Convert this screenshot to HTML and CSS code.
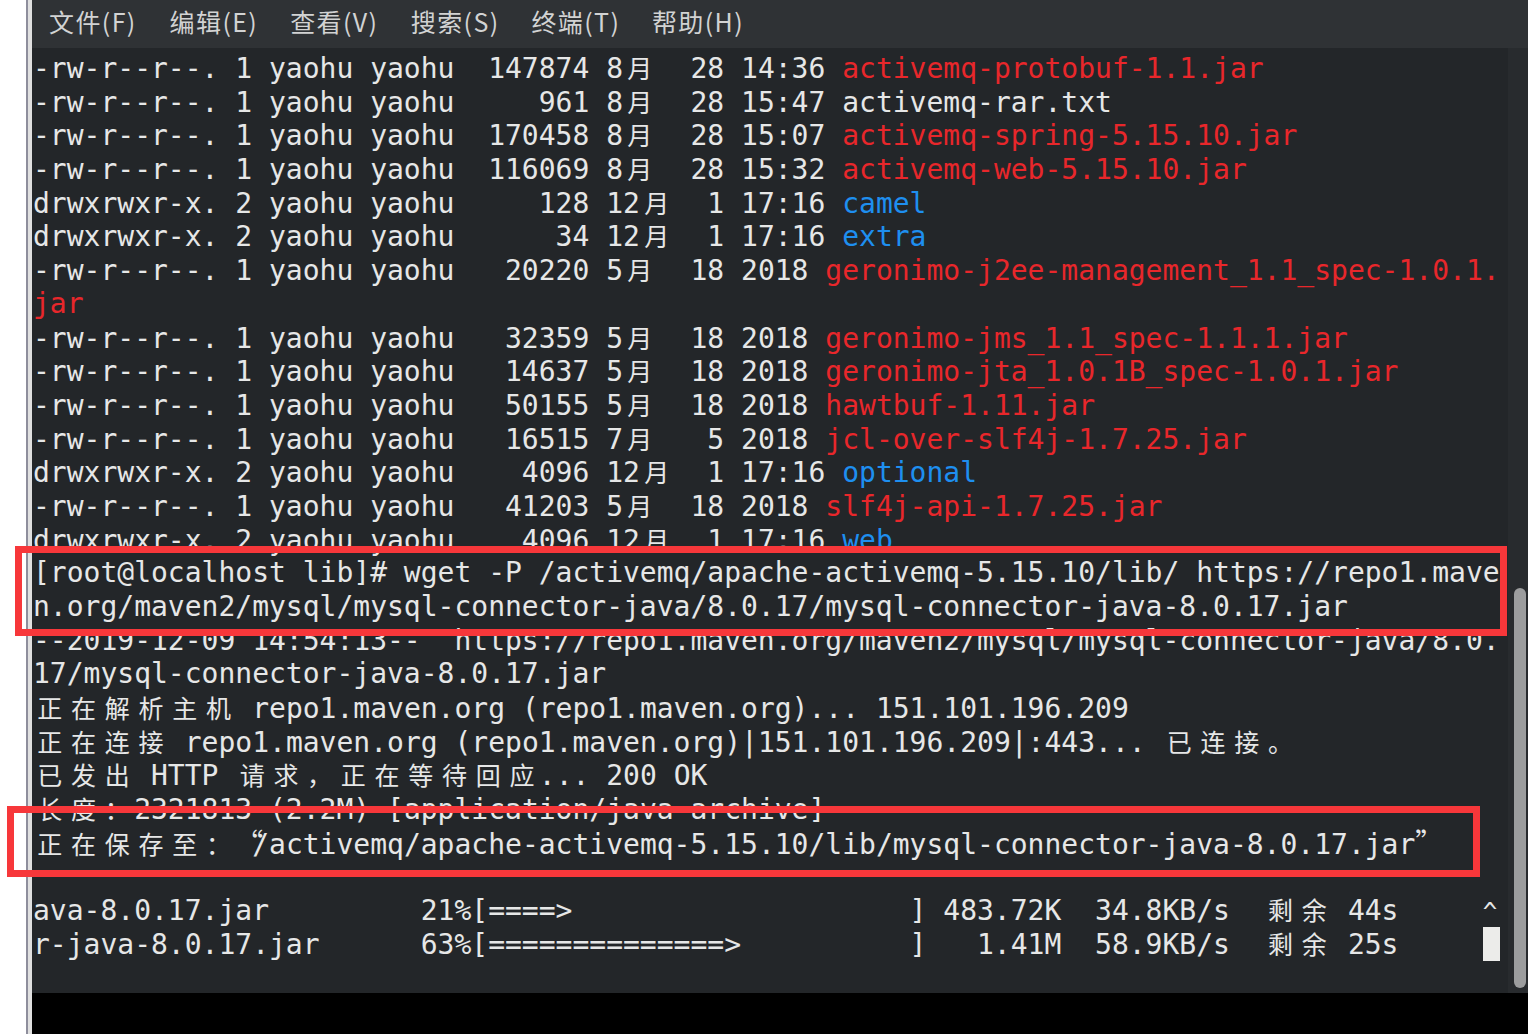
FILE: index.html
```html
<!DOCTYPE html>
<html lang="zh-CN">
<head>
<meta charset="utf-8">
<title>终端</title>
<link rel="stylesheet" href="styles.css">
</head>
<body>
<div class="app">
  <div class="gutter"></div>
  <div class="edge-dark"></div>
  <div class="edge-light"></div>
  <div class="window">
    <nav class="menubar">
      <span class="menu-item">文件(F)</span>
      <span class="menu-item">编辑(E)</span>
      <span class="menu-item">查看(V)</span>
      <span class="menu-item">搜索(S)</span>
      <span class="menu-item">终端(T)</span>
      <span class="menu-item">帮助(H)</span>
    </nav>
    <div class="term">
      <div class="screen">
<div class="row">-rw-r--r--. 1 yaohu yaohu  147874 8<span class="w">月</span>  28 14:36 <span class="r">activemq-protobuf-1.1.jar</span></div>
<div class="row">-rw-r--r--. 1 yaohu yaohu     961 8<span class="w">月</span>  28 15:47 activemq-rar.txt</div>
<div class="row">-rw-r--r--. 1 yaohu yaohu  170458 8<span class="w">月</span>  28 15:07 <span class="r">activemq-spring-5.15.10.jar</span></div>
<div class="row">-rw-r--r--. 1 yaohu yaohu  116069 8<span class="w">月</span>  28 15:32 <span class="r">activemq-web-5.15.10.jar</span></div>
<div class="row">drwxrwxr-x. 2 yaohu yaohu     128 12<span class="w">月</span>  1 17:16 <span class="b">camel</span></div>
<div class="row">drwxrwxr-x. 2 yaohu yaohu      34 12<span class="w">月</span>  1 17:16 <span class="b">extra</span></div>
<div class="row">-rw-r--r--. 1 yaohu yaohu   20220 5<span class="w">月</span>  18 2018 <span class="r">geronimo-j2ee-management_1.1_spec-1.0.1.</span></div>
<div class="row"><span class="r">jar</span></div>
<div class="row">-rw-r--r--. 1 yaohu yaohu   32359 5<span class="w">月</span>  18 2018 <span class="r">geronimo-jms_1.1_spec-1.1.1.jar</span></div>
<div class="row">-rw-r--r--. 1 yaohu yaohu   14637 5<span class="w">月</span>  18 2018 <span class="r">geronimo-jta_1.0.1B_spec-1.0.1.jar</span></div>
<div class="row">-rw-r--r--. 1 yaohu yaohu   50155 5<span class="w">月</span>  18 2018 <span class="r">hawtbuf-1.11.jar</span></div>
<div class="row">-rw-r--r--. 1 yaohu yaohu   16515 7<span class="w">月</span>   5 2018 <span class="r">jcl-over-slf4j-1.7.25.jar</span></div>
<div class="row">drwxrwxr-x. 2 yaohu yaohu    4096 12<span class="w">月</span>  1 17:16 <span class="b">optional</span></div>
<div class="row">-rw-r--r--. 1 yaohu yaohu   41203 5<span class="w">月</span>  18 2018 <span class="r">slf4j-api-1.7.25.jar</span></div>
<div class="row">drwxrwxr-x. 2 yaohu yaohu    4096 12<span class="w">月</span>  1 17:16 <span class="b">web</span></div>
<div class="row">[root@localhost lib]# wget -P /activemq/apache-activemq-5.15.10/lib/ https://repo1.mave</div>
<div class="row">n.org/maven2/mysql/mysql-connector-java/8.0.17/mysql-connector-java-8.0.17.jar</div>
<div class="row">--2019-12-09 14:54:13--  https://repo1.maven.org/maven2/mysql/mysql-connector-java/8.0.</div>
<div class="row">17/mysql-connector-java-8.0.17.jar</div>
<div class="row"><span class="w">正</span><span class="w">在</span><span class="w">解</span><span class="w">析</span><span class="w">主</span><span class="w">机</span> repo1.maven.org (repo1.maven.org)... 151.101.196.209</div>
<div class="row"><span class="w">正</span><span class="w">在</span><span class="w">连</span><span class="w">接</span> repo1.maven.org (repo1.maven.org)|151.101.196.209|:443... <span class="w">已</span><span class="w">连</span><span class="w">接</span><span class="w">。</span></div>
<div class="row"><span class="w">已</span><span class="w">发</span><span class="w">出</span> HTTP <span class="w">请</span><span class="w">求</span><span class="w">，</span><span class="w">正</span><span class="w">在</span><span class="w">等</span><span class="w">待</span><span class="w">回</span><span class="w">应</span>... 200 OK</div>
<div class="row"><span class="w">长</span><span class="w">度</span><span class="w">：</span>2321813 (2.2M) [application/java-archive]</div>
<div class="row"><span class="w">正</span><span class="w">在</span><span class="w">保</span><span class="w">存</span><span class="w">至</span><span class="w">：</span><span class="q">“</span>/activemq/apache-activemq-5.15.10/lib/mysql-connector-java-8.0.17.jar<span class="q">”</span></div>
<div class="row"> </div>
<div class="row">ava-8.0.17.jar         21%[====&gt;                    ] 483.72K  34.8KB/s  <span class="w">剩</span><span class="w">余</span> 44s     <span class="caret">^</span></div>
<div class="row">r-java-8.0.17.jar      63%[==============&gt;          ]   1.41M  58.9KB/s  <span class="w">剩</span><span class="w">余</span> 25s     <span class="cur"> </span></div>
      </div>
      <div class="trough"><div class="slider"></div></div>
    </div>
    <div class="bottom"></div>
  </div>
  <div class="mark mark-cmd"></div>
  <div class="mark mark-save"></div>
</div>
</body>
</html>
```
FILE: styles.css
```css
html, body {
  margin: 0;
  padding: 0;
  background: #ffffff;
}

.app {
  position: relative;
  display: flex;
  width: 1528px;
  height: 1034px;
  overflow: hidden;
}

.gutter {
  width: 26px;
  flex: none;
  background: #ffffff;
}

.edge-dark {
  width: 2px;
  flex: none;
  background: #8e8e9c;
}

.edge-light {
  width: 4px;
  flex: none;
  background: #e0e0e0;
}

.window {
  flex: 1;
  display: flex;
  flex-direction: column;
  min-width: 0;
}

.menubar {
  height: 48px;
  box-sizing: border-box;
  flex: none;
  display: flex;
  align-items: flex-start;
  padding: 3px 0 0 17px;
  background: #2f3235;
  color: #d2d3d3;
  font-family: "Noto Sans CJK SC", "Noto Sans", sans-serif;
  font-size: 25px;
  letter-spacing: 1.4px;
}

.menu-item {
  flex: none;
  width: 120.6px;
  line-height: 36px;
}

.term {
  flex: 1;
  display: flex;
  background: #232629;
  min-height: 0;
}

.screen {
  flex: 1;
  padding: 3px 0 0 1px;
  font-family: "DejaVu Sans Mono", "Noto Sans CJK SC", monospace;
  font-size: 28px;
  line-height: 33.7px;
  color: #e6e7e7;
  overflow: hidden;
}

.row {
  height: 33.7px;
  white-space: pre;
}

.r {
  color: #e8272b;
}

.b {
  color: #1e8ff0;
}

.w {
  display: inline-block;
  width: 33.72px;
  text-align: center;
  font-family: "Noto Sans CJK SC", sans-serif;
  font-size: 25px;
}

.q {
  display: inline-block;
  width: 16.86px;
  font-family: "Noto Sans CJK SC", sans-serif;
  font-size: 28px;
  white-space: nowrap;
}

.caret {
  font-size: 24px;
}

.cur {
  display: inline-block;
  width: 1ch;
  height: 33.7px;
  vertical-align: top;
  background: #ececea;
}

.trough {
  width: 20px;
  flex: none;
  background: #282b2e;
  padding-top: 540px;
  box-sizing: border-box;
}

.slider {
  width: 12px;
  height: 400px;
  margin-left: 6px;
  border-radius: 6px;
  background: #9c9d9e;
}

.bottom {
  height: 41px;
  flex: none;
  background: #000000;
}

.mark {
  position: absolute;
  box-sizing: border-box;
  border: 7px solid #f7373a;
}

.mark-cmd {
  left: 15px;
  top: 546px;
  width: 1492px;
  height: 90px;
}

.mark-save {
  left: 7px;
  top: 806px;
  width: 1473px;
  height: 71px;
}
```
